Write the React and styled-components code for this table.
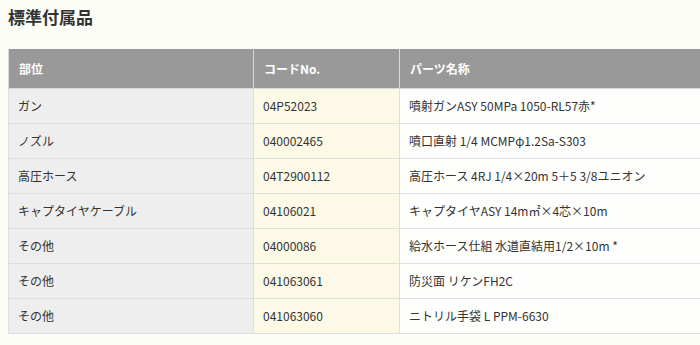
import React from "react";
import styled, { createGlobalStyle } from "styled-components";

const Global = createGlobalStyle`
  html, body {
    margin: 0;
    background: #fdfdf8;
    overflow: hidden;
  }
  body {
    font-family: "Noto Sans CJK JP", "Noto Sans", sans-serif;
    color: #333;
  }
`;

const Page = styled.div`
  padding: 4px 0 0 8px;
  width: 760px;
`;

const Title = styled.h2`
  margin: 0 0 19px;
  font-size: 17px;
  font-weight: 700;
  line-height: 26px;
  color: #333;
`;

const Table = styled.table`
  border-collapse: collapse;
  width: 100%;
  table-layout: fixed;
  font-size: 12px;
`;

const Head = styled.th`
  height: 39px;
  padding: 0 10px;
  background: #999;
  color: #fff;
  font-weight: 700;
  text-align: left;
  border: 1px solid #d8d8d8;
  border-top: none;
  box-sizing: border-box;
`;

const tones = {
  part: "#eeeeee",
  code: "#fcfae7",
  name: "#fefefc",
};

const Cell = styled.td`
  height: 35px;
  padding: 0 8px 0 9px;
  background: ${(p) => tones[p.$tone]};
  border: 1px solid #dedede;
  color: #333;
  white-space: nowrap;
  box-sizing: border-box;
`;

const rows = [
  ["ガン", "04P52023", "噴射ガンASY 50MPa 1050-RL57赤*"],
  ["ノズル", "040002465", "噴口直射 1/4 MCMPφ1.2Sa-S303"],
  ["高圧ホース", "04T2900112", "高圧ホース 4RJ 1/4×20m 5＋5 3/8ユニオン"],
  ["キャプタイヤケーブル", "04106021", "キャプタイヤASY 14m㎡×4芯×10m"],
  ["その他", "04000086", "給水ホース仕組 水道直結用1/2×10m *"],
  ["その他", "041063061", "防災面 リケンFH2C"],
  ["その他", "041063060", "ニトリル手袋 L PPM-6630"],
];

export default function App() {
  return (
    <>
      <Global />
      <Page>
        <Title>標準付属品</Title>
        <Table>
          <colgroup>
            <col style={{ width: 245 }} />
            <col style={{ width: 146 }} />
            <col />
          </colgroup>
          <thead>
            <tr>
              <Head>部位</Head>
              <Head>コードNo.</Head>
              <Head>パーツ名称</Head>
            </tr>
          </thead>
          <tbody>
            {rows.map(([part, code, name], i) => (
              <tr key={i}>
                <Cell $tone="part">{part}</Cell>
                <Cell $tone="code">{code}</Cell>
                <Cell $tone="name">{name}</Cell>
              </tr>
            ))}
          </tbody>
        </Table>
      </Page>
    </>
  );
}
